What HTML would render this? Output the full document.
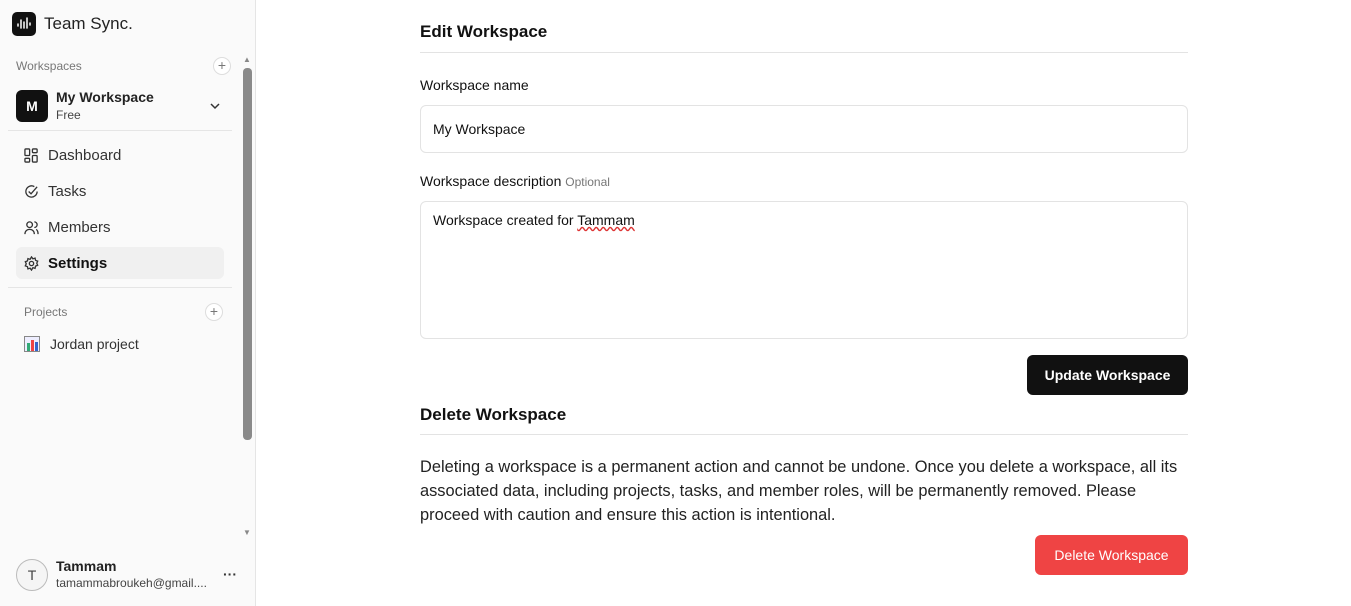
<!DOCTYPE html>
<html><head><style>
*{box-sizing:border-box;margin:0;padding:0}
body{width:1351px;height:606px;overflow:hidden;font-family:"Liberation Sans",sans-serif;background:#fff;color:#111;position:relative}
.side{position:absolute;left:0;top:0;width:256px;height:606px;background:#fafafa;border-right:1px solid #e5e5e5}
.a{position:absolute}
.nav{position:absolute;left:16px;width:208px;height:32px;display:flex;align-items:center;padding-left:8px;font-size:15px;color:#333;border-radius:6px}
.nav svg{margin-right:9px}
.plus{position:absolute;width:18px;height:18px;border:1px solid #ddd;border-radius:50%;font-size:14px;line-height:15px;text-align:center;color:#777;background:#fff}
.lbl{font-size:14px;color:#111}
.inp{position:absolute;left:420px;width:768px;border:1px solid #e3e3e3;border-radius:6px;font-size:14px;padding:0 12px}
</style></head><body>
<div class="side">
<div class="a" style="left:12px;top:12px;width:24px;height:24px;background:#111;border-radius:5px"><svg width="24" height="24" viewBox="0 0 24 24" fill="none" stroke="#fff" stroke-width="1.5" stroke-linecap="round"><path d="M6 12v2M9 8v8M12 10v6M15 6v10M18 11v2"/></svg></div>
<div class="a" style="left:44px;top:14px;font-size:17px;color:#222">Team Sync.</div>
<div class="a" style="left:16px;top:59px;font-size:12px;color:#777">Workspaces</div>
<div class="plus" style="left:213px;top:57px">+</div>
<div class="a" style="left:16px;top:90px;width:32px;height:32px;background:#111;border-radius:6px;color:#fff;font-weight:bold;font-size:14px;text-align:center;line-height:32px">M</div>
<div class="a" style="left:56px;top:89px;font-size:14px;font-weight:bold;color:#222">My Workspace</div>
<div class="a" style="left:56px;top:108px;font-size:12px;color:#444">Free</div>
<svg class="a" style="left:209px;top:100px" width="12" height="12" viewBox="0 0 12 12" fill="none" stroke="#333" stroke-width="1.5"><path d="M2 4l4 4 4-4"/></svg>
<div class="a" style="left:8px;top:130px;width:224px;border-top:1px solid #e5e5e5"></div>
<div class="nav" style="top:139px"><svg width="15" height="15" viewBox="0 0 16 16" fill="none" stroke="#333" stroke-width="1.4"><rect x="1" y="1" width="5" height="7" rx="1"/><rect x="9" y="1" width="5" height="4" rx="1"/><rect x="9" y="8" width="5" height="7" rx="1"/><rect x="1" y="11" width="5" height="4" rx="1"/></svg>Dashboard</div>
<div class="nav" style="top:175px"><svg width="15" height="15" viewBox="0 0 16 16" fill="none" stroke="#333" stroke-width="1.4"><path d="M14 8a6 6 0 1 1-3-5.2"/><path d="M5 8l2.5 2.5L14 3"/></svg>Tasks</div>
<div class="nav" style="top:211px"><svg width="15" height="15" viewBox="0 0 16 16" fill="none" stroke="#333" stroke-width="1.4"><circle cx="6" cy="5" r="3"/><path d="M1 15c0-3 2-5 5-5s5 2 5 5M11 2a3 3 0 0 1 0 6M13 10c1.5 1 2 3 2 5"/></svg>Members</div>
<div class="nav" style="top:247px;background:#f0f0f0;color:#111;font-weight:bold"><svg width="15" height="15" viewBox="0 0 16 16" fill="none" stroke="#333" stroke-width="1.4"><circle cx="8" cy="8" r="2.3"/><path d="M8 1l1.5 2 2.3-.8.5 2.4 2.3.9-1 2.2 1 2.2-2.3.9-.5 2.4-2.3-.8L8 15l-1.5-2-2.3.8-.5-2.4-2.3-.9 1-2.2-1-2.2 2.3-.9.5-2.4 2.3.8z"/></svg>Settings</div>
<div class="a" style="left:8px;top:287px;width:224px;border-top:1px solid #e5e5e5"></div>
<div class="a" style="left:24px;top:305px;font-size:12px;color:#777">Projects</div>
<div class="plus" style="left:205px;top:303px">+</div>
<div class="a" style="left:24px;top:336px;width:16px;height:16px;border:1px solid #888;background:#eef"><div class="a" style="left:2px;top:6px;width:3px;height:8px;background:#3a7"></div><div class="a" style="left:6px;top:3px;width:3px;height:11px;background:#e44"></div><div class="a" style="left:10px;top:5px;width:3px;height:9px;background:#36c"></div></div>
<div class="a" style="left:50px;top:336px;font-size:14px;color:#333">Jordan project</div>
<div class="a" style="left:243px;top:68px;width:9px;height:372px;background:#8a8a8a;border-radius:4px"></div>
<div class="a" style="left:243px;top:55px;font-size:8px;color:#888">▲</div>
<div class="a" style="left:243px;top:528px;font-size:8px;color:#888">▼</div>
<div class="a" style="left:16px;top:559px;width:32px;height:32px;border:1px solid #bbb;border-radius:50%;text-align:center;line-height:30px;font-size:14px;color:#444;background:#f5f5f5">T</div>
<div class="a" style="left:56px;top:558px;font-size:14px;font-weight:bold;color:#222">Tammam</div>
<div class="a" style="left:56px;top:576px;font-size:12px;color:#444">tamammabroukeh@gmail....</div>
<div class="a" style="left:223px;top:566px;font-size:14px;font-weight:bold;color:#333">···</div>
</div>
<div class="a" style="left:420px;top:22px;font-size:17px;font-weight:bold">Edit Workspace</div>
<div class="a" style="left:420px;top:52px;width:768px;border-top:1px solid #e3e3e3"></div>
<div class="a lbl" style="left:420px;top:77px">Workspace name</div>
<div class="inp" style="top:105px;height:48px;line-height:46px">My Workspace</div>
<div class="a lbl" style="left:420px;top:173px">Workspace description <span style="font-size:12px;color:#777">Optional</span></div>
<div class="inp" style="top:201px;height:138px;padding-top:10px">Workspace created for <span style="text-decoration:underline wavy #d33">Tammam</span></div>
<div class="a" style="left:1027px;top:355px;width:161px;height:40px;background:#111;border-radius:6px;color:#fff;font-weight:bold;font-size:14px;text-align:center;line-height:40px">Update Workspace</div>
<div class="a" style="left:420px;top:405px;font-size:17px;font-weight:bold">Delete Workspace</div>
<div class="a" style="left:420px;top:434px;width:768px;border-top:1px solid #e3e3e3"></div>
<div class="a" style="left:420px;top:455px;width:770px;font-size:16.4px;line-height:24px;color:#222">Deleting a workspace is a permanent action and cannot be undone. Once you delete a workspace, all its associated data, including projects, tasks, and member roles, will be permanently removed. Please proceed with caution and ensure this action is intentional.</div>
<div class="a" style="left:1035px;top:535px;width:153px;height:40px;background:#ef4444;border-radius:6px;color:#fff;font-size:14px;text-align:center;line-height:40px">Delete Workspace</div>
</body></html>
